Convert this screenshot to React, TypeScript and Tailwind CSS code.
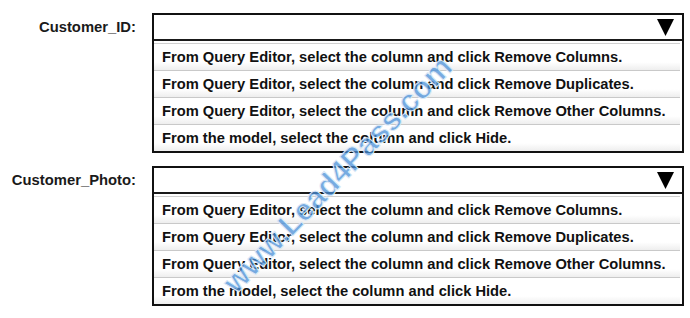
import React from 'react';

const options = [
  'From Query Editor, select the column and click Remove Columns.',
  'From Query Editor, select the column and click Remove Duplicates.',
  'From Query Editor, select the column and click Remove Other Columns.',
  'From the model, select the column and click Hide.',
];

function Dropdown({ label }: { label: string }) {
  return (
    <div className="flex items-start">
      <div className="w-[136px] h-[28px] flex items-center justify-end text-[14.8px] font-bold text-[#1a1a1a]">
        {label}
      </div>
      <div className="ml-[16px] w-[532px] border-2 border-[#111]">
        {/* Header */}
        <div className="h-[26px] flex items-center justify-end pr-[8px] border-b-2 border-[#1a1a1a]">
          <svg width="17" height="17" viewBox="0 0 17 17">
            <polygon points="0,0 17,0 8.5,17" fill="#000" />
          </svg>
        </div>
        {/* Options */}
        <div className="pt-[2px] pr-[2px]">
          <div className="border-t border-[#d0d0d0]">
            {options.map((opt) => (
              <div
                key={opt}
                className="h-[27px] flex items-center pl-[8px] border-b border-[#c9c9c9] bg-gradient-to-b from-white from-70% to-[#eeeeee] text-[14.7px] font-bold text-[#111] last:border-b-0 last:h-[26px]"
              >
                {opt}
              </div>
            ))}
          </div>
        </div>
      </div>
    </div>
  );
}

export default function App() {
  return (
    <div
      className="relative w-[690px] h-[318px] bg-white overflow-hidden pt-[13px]"
      style={{ fontFamily: '"Liberation Sans", Arial, sans-serif' }}
    >
      <div className="flex flex-col gap-[13px]">
        <Dropdown label="Customer_ID:" />
        <Dropdown label="Customer_Photo:" />
      </div>
      {/* Watermark */}
      <div className="absolute left-[338px] top-[175px] -translate-x-1/2 -translate-y-1/2 -rotate-[46deg] whitespace-nowrap text-[31px] font-bold text-[#4a8fd8]/75 [-webkit-text-stroke:1px_#dbe9f7] pointer-events-none">
        www.Lead4Pass.com
      </div>
    </div>
  );
}
